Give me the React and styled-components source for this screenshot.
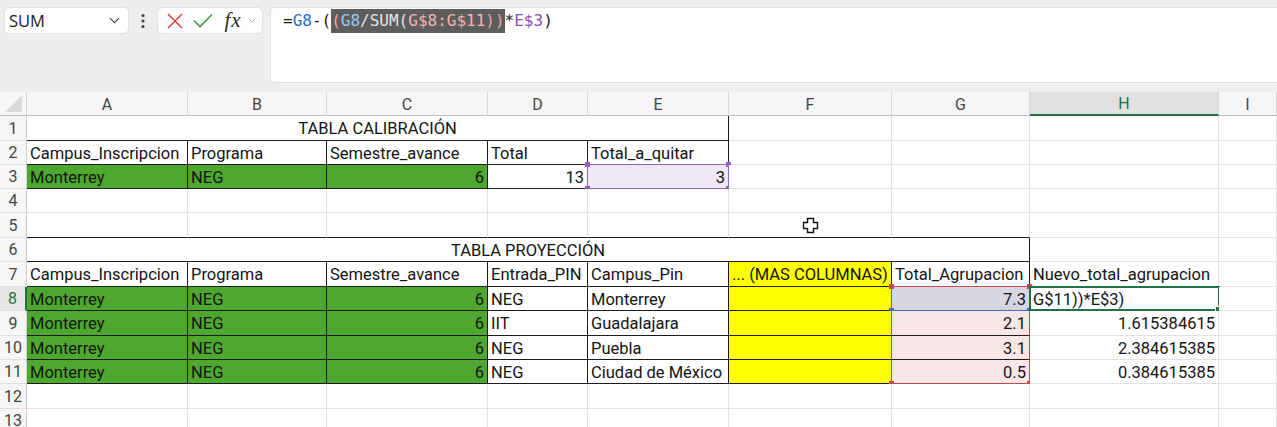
import React from "react";
import styled, { createGlobalStyle } from "styled-components";
import { ChevronDown } from "lucide-react";

/* ─── Sheet data ─── */

const GREEN = "#4ea72e";
const YELLOW = "#ffff00";
const EDGE = "#1c1c1c";
const GRID = "#e2e2e2";
const RED = "#c24b4b";
const BLUE = "#3b6fc6";
const PURPLE = "#8f62be";
const ACTIVE = "#217346";

const COLUMNS = [
  { key: "A", width: 161 },
  { key: "B", width: 139 },
  { key: "C", width: 161 },
  { key: "D", width: 100 },
  { key: "E", width: 141 },
  { key: "F", width: 163 },
  { key: "G", width: 138 },
  { key: "H", width: 189 },
  { key: "I", width: 0 },
];

const ROW_HEIGHTS = [25, 24, 24, 24, 25, 24, 25, 24, 25, 24, 24, 25, 24];

const blank = (n, extra = {}) => Array.from({ length: n }, () => ({ ...extra }));

// G8:G11 reference outline pieces
const refTop = { top: RED, left: RED, right: RED, bottom: BLUE, handles: [["tl", RED], ["tr", RED], ["bl", BLUE], ["br", BLUE]] };
const refMid = { left: RED, right: RED };
const refEnd = { left: RED, right: RED, bottom: RED, handles: [["bl", RED], ["br", RED]] };

const ROWS = [
  [
    { text: "TABLA CALIBRACIÓN", span: 5, align: "center", edge: true },
    ...blank(4),
  ],
  [
    { text: "Campus_Inscripcion", edge: true },
    { text: "Programa", edge: true },
    { text: "Semestre_avance", edge: true },
    { text: "Total", edge: true },
    { text: "Total_a_quitar", edge: true },
    ...blank(4),
  ],
  [
    { text: "Monterrey", fill: GREEN, edge: true },
    { text: "NEG", fill: GREEN, edge: true },
    { text: "6", fill: GREEN, align: "right", edge: true },
    { text: "13", align: "right", edge: true },
    {
      text: "3",
      align: "right",
      edge: true,
      fill: "#f0e7f7",
      frame: { top: PURPLE, left: PURPLE, right: PURPLE, bottom: PURPLE, handles: [["tl", PURPLE], ["tr", PURPLE], ["bl", PURPLE], ["br", PURPLE]] },
    },
    ...blank(4),
  ],
  blank(9),
  [...blank(7, { bottom: true }), ...blank(2)],
  [
    { text: "TABLA PROYECCIÓN", span: 7, align: "center", edge: true },
    ...blank(2),
  ],
  [
    { text: "Campus_Inscripcion", edge: true },
    { text: "Programa", edge: true },
    { text: "Semestre_avance", edge: true },
    { text: "Entrada_PIN", edge: true },
    { text: "Campus_Pin", edge: true },
    { text: "... (MAS COLUMNAS)", fill: YELLOW, edge: true },
    { text: "Total_Agrupacion", edge: true },
    { text: "Nuevo_total_agrupacion" },
    {},
  ],
  [
    { text: "Monterrey", fill: GREEN, edge: true },
    { text: "NEG", fill: GREEN, edge: true },
    { text: "6", fill: GREEN, align: "right", edge: true },
    { text: "NEG", edge: true },
    { text: "Monterrey", edge: true },
    { fill: YELLOW, edge: true },
    { text: "7.3", align: "right", edge: true, fill: "#d9d6e4", frame: refTop },
    { text: "G$11))*E$3)", active: true },
    {},
  ],
  [
    { text: "Monterrey", fill: GREEN, edge: true },
    { text: "NEG", fill: GREEN, edge: true },
    { text: "6", fill: GREEN, align: "right", edge: true },
    { text: "IIT", edge: true },
    { text: "Guadalajara", edge: true },
    { fill: YELLOW, edge: true },
    { text: "2.1", align: "right", edge: true, fill: "#f9e7e7", frame: refMid },
    { text: "1.615384615", align: "right" },
    {},
  ],
  [
    { text: "Monterrey", fill: GREEN, edge: true },
    { text: "NEG", fill: GREEN, edge: true },
    { text: "6", fill: GREEN, align: "right", edge: true },
    { text: "NEG", edge: true },
    { text: "Puebla", edge: true },
    { fill: YELLOW, edge: true },
    { text: "3.1", align: "right", edge: true, fill: "#f9e7e7", frame: refMid },
    { text: "2.384615385", align: "right" },
    {},
  ],
  [
    { text: "Monterrey", fill: GREEN, edge: true },
    { text: "NEG", fill: GREEN, edge: true },
    { text: "6", fill: GREEN, align: "right", edge: true },
    { text: "NEG", edge: true },
    { text: "Ciudad de México", edge: true },
    { fill: YELLOW, edge: true },
    { text: "0.5", align: "right", edge: true, fill: "#f9e7e7", frame: refEnd },
    { text: "0.384615385", align: "right" },
    {},
  ],
  blank(9),
  blank(9),
];

// formula tokens: [text, colour, highlighted]
const FORMULA = [
  ["=", "#1b1b1b"],
  ["G8", "#1e6fbf"],
  ["-(", "#1b1b1b"],
  ["(", "#e7aaa6", true],
  ["G8", "#9ec8ee", true],
  ["/SUM(", "#e4e4e4", true],
  ["G$8:G$11", "#f1b3b0", true],
  ["))", "#e7aaa6", true],
  ["*", "#1b1b1b"],
  ["E$3", "#8a4db3"],
  [")", "#1b1b1b"],
];

/* ─── Styled Components ─── */

const GlobalStyle = createGlobalStyle`
  html, body {
    margin: 0;
    padding: 0;
    background: #ffffff;
    overflow: hidden;
  }
  body {
    font-family: Roboto, "Liberation Sans", sans-serif;
  }
`;

const Page = styled.div`
  width: 1277px;
  height: 427px;
  overflow: hidden;
  display: flex;
  flex-direction: column;
  position: relative;
`;

const TopBar = styled.div`
  height: 92px;
  flex: none;
  background: #edefee;
  display: flex;
  align-items: flex-start;
  padding: 7px 0 0 4px;
  box-sizing: border-box;
`;

const NameBox = styled.div`
  width: 125px;
  height: 27px;
  box-sizing: border-box;
  background: #ffffff;
  border: 1px solid #e0e2e1;
  border-radius: 5px;
  display: flex;
  align-items: center;
  justify-content: space-between;
  padding: 0 5px 0 4px;
  font-family: "Open Sans", "Noto Sans", sans-serif;
  font-size: 16.5px;
  color: #222;
`;

const Dots = styled.div`
  width: 28px;
  height: 27px;
  display: flex;
  align-items: center;
  justify-content: center;
`;

const FxBox = styled.div`
  width: 106px;
  height: 27px;
  box-sizing: border-box;
  background: #ffffff;
  border: 1px solid #e0e2e1;
  border-radius: 5px;
  display: flex;
  align-items: center;
  padding: 0 4px 0 6px;
`;

const IconSlot = styled.div`
  width: ${({ $w }) => $w}px;
  height: 27px;
  display: flex;
  align-items: center;
  justify-content: center;
  flex: none;
`;

const Fx = styled.span`
  font-family: "Liberation Serif", "DejaVu Serif", serif;
  font-style: italic;
  font-size: 21px;
  color: #2b2b2b;
  letter-spacing: 1px;
`;

const FormulaBox = styled.div`
  flex: 1;
  height: 76px;
  margin-left: 7px;
  box-sizing: border-box;
  background: #ffffff;
  border: 1px solid #e0e2e1;
  border-right: none;
  border-radius: 5px 0 0 5px;
  padding: 1px 0 0 12px;
  font-family: "DejaVu Sans Mono", "Liberation Mono", monospace;
  font-size: 16px;
  line-height: 24px;
  white-space: pre;
`;

const Token = styled.span`
  color: ${({ $color }) => $color};
  background: ${({ $hl }) => ($hl ? "#5d5d5d" : "transparent")};
  display: inline-block;
`;

const Sheet = styled.div`
  display: grid;
  grid-template-columns: 27px ${COLUMNS.map((c) => (c.width ? `${c.width}px` : "1fr")).join(" ")};
  grid-template-rows: 24px ${ROW_HEIGHTS.map((h) => `${h}px`).join(" ")};
`;

const Corner = styled.div`
  background: #f6f6f6;
  border-right: 1px solid #d2d2d2;
  border-bottom: 1px solid #bdbdbd;
  box-sizing: border-box;
  display: flex;
  align-items: flex-end;
  justify-content: flex-end;
  padding: 0 4px 3px 0;
`;

const ColHead = styled.div`
  background: ${({ $active }) => ($active ? "#e1e1e1" : "#f6f6f6")};
  color: ${({ $active }) => ($active ? ACTIVE : "#444")};
  border-right: 1px solid #d8d8d8;
  border-bottom: ${({ $active }) => ($active ? `2px solid ${ACTIVE}` : "1px solid #bdbdbd")};
  box-sizing: border-box;
  display: flex;
  align-items: center;
  justify-content: center;
  font-size: 16px;
  padding-top: 1px;
`;

const RowHead = styled.div`
  background: ${({ $active }) => ($active ? "#e6e6e6" : "#f6f6f6")};
  color: ${({ $active }) => ($active ? ACTIVE : "#444")};
  border-right: ${({ $active }) => ($active ? `2px solid ${ACTIVE}` : "1px solid #cfcfcf")};
  border-bottom: 1px solid #e0e0e0;
  box-sizing: border-box;
  display: flex;
  align-items: center;
  justify-content: center;
  font-size: 16px;
`;

const Cell = styled.div`
  position: relative;
  grid-column: span ${({ $span }) => $span || 1};
  display: flex;
  align-items: center;
  justify-content: ${({ $align }) =>
    $align === "right" ? "flex-end" : $align === "center" ? "center" : "flex-start"};
  padding: 1px 3px 0 3px;
  box-sizing: border-box;
  background: ${({ $fill }) => $fill || "#ffffff"};
  border-right: 1px solid ${({ $edge }) => ($edge ? EDGE : GRID)};
  border-bottom: 1px solid ${({ $edge, $bottom }) => ($edge || $bottom ? EDGE : GRID)};
  font-size: 16.5px;
  color: #141414;
  white-space: nowrap;
  min-width: 0;
`;

const Frame = styled.div`
  position: absolute;
  top: ${({ $top }) => ($top ? "-1px" : "0")};
  left: -1px;
  right: -1px;
  bottom: -1px;
  pointer-events: none;
  border-left: 1px solid ${({ $left }) => $left || "transparent"};
  border-right: 1px solid ${({ $right }) => $right || "transparent"};
  border-top: ${({ $top }) => ($top ? `1px solid ${$top}` : "none")};
  border-bottom: 1px solid ${({ $bottom }) => $bottom || "transparent"};
`;

const Handle = styled.span`
  position: absolute;
  width: 5px;
  height: 5px;
  background: ${({ $color }) => $color};
  ${({ $at }) => ($at[0] === "t" ? "top: -3px;" : "bottom: -3px;")}
  ${({ $at }) => ($at[1] === "l" ? "left: -3px;" : "right: -3px;")}
`;

const ActiveFrame = styled.div`
  position: absolute;
  top: -1px;
  left: -1px;
  right: -2px;
  bottom: -1px;
  border: 2px solid ${ACTIVE};
  pointer-events: none;
`;

const ActiveHandle = styled.span`
  position: absolute;
  right: -4px;
  bottom: -4px;
  width: 5px;
  height: 5px;
  background: ${ACTIVE};
  border: 1px solid #ffffff;
`;

const Pointer = styled.svg`
  position: absolute;
  left: 802px;
  top: 217px;
`;

/* ─── Component ─── */

const SheetCell = ({ cell }) => (
  <Cell
    $span={cell.span}
    $align={cell.align}
    $fill={cell.fill}
    $edge={cell.edge}
    $bottom={cell.bottom}
  >
    {cell.text}
    {cell.frame && (
      <Frame
        $top={cell.frame.top}
        $left={cell.frame.left}
        $right={cell.frame.right}
        $bottom={cell.frame.bottom}
      >
        {(cell.frame.handles || []).map(([at, color]) => (
          <Handle key={at} $at={at} $color={color} />
        ))}
      </Frame>
    )}
    {cell.active && (
      <ActiveFrame>
        <ActiveHandle />
      </ActiveFrame>
    )}
  </Cell>
);

export default function App() {
  return (
    <Page>
      <GlobalStyle />
      <TopBar>
        <NameBox>
          SUM
          <ChevronDown size={17} strokeWidth={1.6} color="#3a3a3a" />
        </NameBox>
        <Dots>
          <svg width="4" height="16" viewBox="0 0 4 16">
            <circle cx="2" cy="2.5" r="1.6" fill="#444" />
            <circle cx="2" cy="8" r="1.6" fill="#444" />
            <circle cx="2" cy="13.5" r="1.6" fill="#444" />
          </svg>
        </Dots>
        <FxBox>
          <IconSlot $w={22}>
            <svg width="16" height="16" viewBox="0 0 16 16">
              <path d="M1 1 L15 15 M15 1 L1 15" stroke="#d8413f" strokeWidth="1.5" fill="none" />
            </svg>
          </IconSlot>
          <IconSlot $w={34}>
            <svg width="20" height="15" viewBox="0 0 20 15">
              <path d="M1 7.5 L7 13.5 L19 1.5" stroke="#3f9a48" strokeWidth="1.6" fill="none" />
            </svg>
          </IconSlot>
          <IconSlot $w={26}>
            <Fx>fx</Fx>
          </IconSlot>
          <IconSlot $w={12}>
            <ChevronDown size={15} strokeWidth={1.5} color="#9a9a9a" />
          </IconSlot>
        </FxBox>
        <FormulaBox>
          {FORMULA.map(([text, color, hl], i) => (
            <Token key={i} $color={color} $hl={hl}>
              {text}
            </Token>
          ))}
        </FormulaBox>
      </TopBar>

      <Sheet>
        <Corner>
          <svg width="17" height="17" viewBox="0 0 17 17">
            <path d="M17 0 L17 17 L0 17 Z" fill="#dadada" />
          </svg>
        </Corner>
        {COLUMNS.map((c) => (
          <ColHead key={c.key} $active={c.key === "H"}>
            {c.key}
          </ColHead>
        ))}
        {ROWS.map((row, r) => (
          <React.Fragment key={r}>
            <RowHead $active={r === 7}>{r + 1}</RowHead>
            {row.map((cell, c) => (
              <SheetCell key={c} cell={cell} />
            ))}
          </React.Fragment>
        ))}
      </Sheet>

      <Pointer width="17" height="17" viewBox="0 0 17 17">
        <path
          d="M5.5 1.5 H11.5 V5.5 H15.5 V11.5 H11.5 V15.5 H5.5 V11.5 H1.5 V5.5 H5.5 Z"
          fill="#ffffff"
          stroke="#111"
          strokeWidth="1.4"
        />
      </Pointer>
    </Page>
  );
}
